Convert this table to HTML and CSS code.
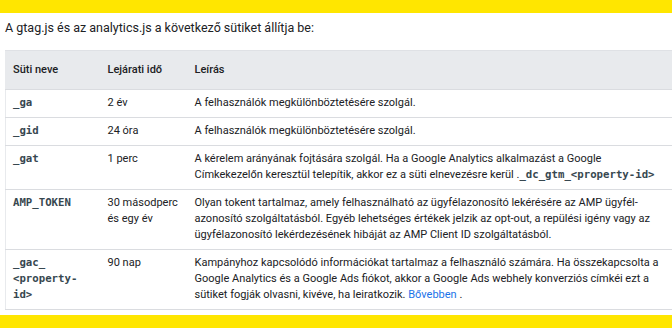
FILE: index.html
```html
<!DOCTYPE html>
<html lang="hu">
<head>
<meta charset="utf-8">
<title>Sütik</title>
<link rel="stylesheet" href="styles.css">
</head>
<body>
<div class="band"></div>
<main class="content">
  <p class="intro">A gtag.js és az analytics.js a következő sütiket állítja be:</p>
  <table class="cookies">
    <colgroup><col class="c1"><col class="c2"><col class="c3"></colgroup>
    <thead>
      <tr><th>Süti neve</th><th>Lejárati idő</th><th>Leírás</th></tr>
    </thead>
    <tbody>
      <tr><td><code>_ga</code></td><td>2 év</td><td>A felhasználók megkülönböztetésére szolgál.</td></tr>
      <tr><td><code>_gid</code></td><td>24 óra</td><td>A felhasználók megkülönböztetésére szolgál.</td></tr>
      <tr><td><code>_gat</code></td><td>1 perc</td><td>A kérelem arányának fojtására szolgál. Ha a Google Analytics alkalmazást a Google Címkekezelőn keresztül telepítik, akkor ez a süti elnevezésre kerül .<code>_dc_gtm_&lt;property-id&gt;</code></td></tr>
      <tr><td><code>AMP_TOKEN</code></td><td>30 másodperc és egy év</td><td>Olyan tokent tartalmaz, amely felhasználható az ügyfélazonosító lekérésére az AMP ügyfél-<br>azonosító szolgáltatásból. Egyéb lehetséges értékek jelzik az opt-out, a repülési igény vagy az ügyfélazonosító lekérdezésének hibáját az AMP Client ID szolgáltatásból.</td></tr>
      <tr><td><code>_gac_<br>&lt;property-<br>id&gt;</code></td><td>90 nap</td><td>Kampányhoz kapcsolódó információkat tartalmaz a felhasználó számára. Ha összekapcsolta a Google Analytics és a Google Ads fiókot, akkor a Google Ads webhely konverziós címkéi ezt a sütiket fogják olvasni, kivéve, ha leiratkozik. <a href="#">Bővebben</a> .</td></tr>
    </tbody>
  </table>
</main>
<div class="band"></div>
</body>
</html>
```
FILE: styles.css
```css
html, body {
  margin: 0;
  padding: 0;
}
body {
  height: 100vh;
  display: flex;
  flex-direction: column;
  overflow: hidden;
  background: #ffffff;
  font-family: Roboto, "Liberation Sans", sans-serif;
  color: #202124;
}
.band {
  flex: 0 0 13px;
  background: #ffe600;
}
.content {
  flex: 1 1 auto;
  padding: 0 0 0 5px;
  overflow: hidden;
}
.intro {
  margin: 6px 0 13px 0;
  font-size: 12.5px;
  line-height: 18px;
}
.cookies {
  width: 670px;
  table-layout: fixed;
  border-collapse: collapse;
  border-left: 1px solid #e8eaed;
  font-size: 11px;
  line-height: 16px;
}
.c1 { width: 95px; }
.c2 { width: 87px; }
.cookies th {
  background: #e8eaed;
  text-align: left;
  font-weight: 500;
  padding: 11px 7px;
  border-top: 1px solid #dfe1e5;
  border-bottom: 1px solid #dadce0;
}
.cookies td {
  vertical-align: top;
  padding: 5px 7px 6px 7px;
  border-bottom: 1px solid #dadce0;
}
.cookies code {
  font-family: "DejaVu Sans Mono", monospace;
  font-size: 10.7px;
  font-weight: 700;
  color: #37474f;
}
.cookies a {
  color: #1a73e8;
  text-decoration: none;
}
```
